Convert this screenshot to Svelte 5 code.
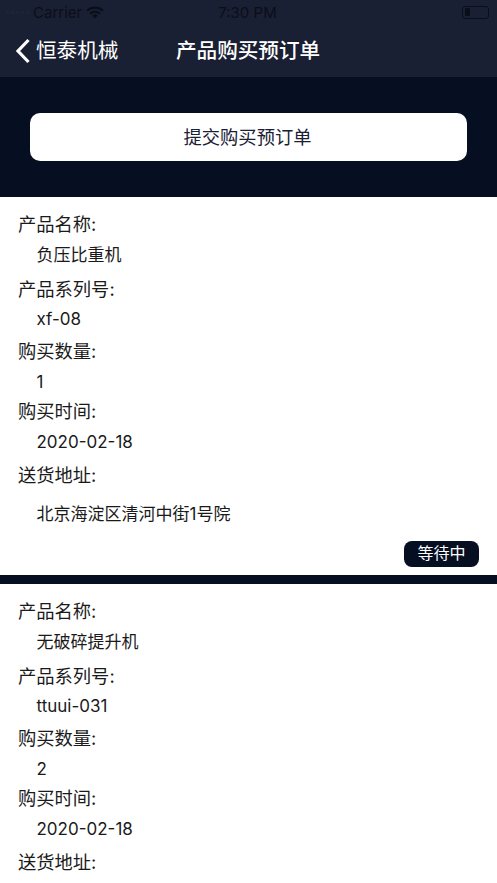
<script>
  const orders = [
    { name: '负压比重机', serial: 'xf-08', qty: '1', date: '2020-02-18', addr: '北京海淀区清河中街1号院', status: '等待中' },
    { name: '无破碎提升机', serial: 'ttuui-031', qty: '2', date: '2020-02-18', addr: '', status: '' }
  ];
</script>

<div class="page">
  <header class="top">
    <div class="status">
      <div class="status-left">
        <span class="dots"><i></i><i></i><i></i><i></i><i></i></span>
        <span class="carrier">Carrier</span>
        <svg class="wifi" width="18" height="13" viewBox="0 0 18 13">
          <path d="M9 12.6 6.3 9.4a4.2 4.2 0 0 1 5.4 0z" fill="#0a0e18"/>
          <path d="M1 4.6a12 12 0 0 1 16 0" fill="none" stroke="#0a0e18" stroke-width="2.2"/>
          <path d="M3.9 7.7a7.7 7.7 0 0 1 10.2 0" fill="none" stroke="#0a0e18" stroke-width="2.2"/>
        </svg>
      </div>
      <span class="time">7:30 PM</span>
      <div class="battery"><span class="level"></span></div>
    </div>
    <nav class="nav">
      <svg class="chev" width="16" height="26" viewBox="0 0 16 26">
        <path d="M13.5 2 3 13l10.5 11" fill="none" stroke="#fff" stroke-width="3.2"/>
      </svg>
      <span class="back">恒泰机械</span>
      <span class="title">产品购买预订单</span>
    </nav>
  </header>

  <section class="hero">
    <button class="submit">提交购买预订单</button>
  </section>

  {#each orders as o}
    <article class="card">
      <div class="label first">产品名称:</div>
      <div class="value">{o.name}</div>
      <div class="label gap5">产品系列号:</div>
      <div class="value tight">{o.serial}</div>
      <div class="label gap3">购买数量:</div>
      <div class="value">{o.qty}</div>
      <div class="label">购买时间:</div>
      <div class="value">{o.date}</div>
      <div class="label gap4">送货地址:</div>
      {#if o.addr}
        <div class="value addr">{o.addr}</div>
      {/if}
      {#if o.status}
        <div class="foot"><span class="badge">{o.status}</span></div>
      {/if}
    </article>
  {/each}
</div>

<style>
  :global(html), :global(body) {
    margin: 0;
    overflow: hidden;
  }
  .page {
    width: 497px;
    height: 883px;
    overflow: hidden;
    background: #060e22;
    font-family: Inter, "Noto Sans CJK SC", sans-serif;
  }
  .top {
    height: 77px;
    background: #1a2033;
    display: flex;
    flex-direction: column;
  }
  .status {
    height: 26px;
    display: grid;
    grid-template-columns: 1fr auto 1fr;
    align-items: center;
    font-size: 15px;
    color: #0a0e18;
    padding: 0 8px 2px 6px;
    box-sizing: border-box;
  }
  .status-left {
    display: flex;
    align-items: center;
    gap: 4px;
  }
  .dots {
    display: flex;
    gap: 2px;
  }
  .dots i {
    width: 3px;
    height: 3px;
    border-radius: 50%;
    background: #20263a;
  }
  .battery {
    justify-self: end;
    width: 22px;
    border: 1px solid #0a0e18;
    border-radius: 3px;
    padding: 1.5px;
    height: 8px;
  }
  .level {
    display: block;
    width: 5px;
    height: 8px;
    background: #0a0e18;
    border-radius: 1px;
  }
  .nav {
    flex: 1;
    display: flex;
    align-items: center;
    color: #fff;
    padding: 0 0 1px 15px;
    font-size: 20.6px;
    line-height: 30px;
  }
  .back {
    margin-left: 5px;
    width: 140px;
    flex: none;
  }
  .title {
    font-weight: 500;
  }
  .hero {
    height: 120px;
    padding: 36px 30px 0;
    box-sizing: border-box;
  }
  .submit {
    display: block;
    width: 100%;
    height: 48px;
    border: 0;
    border-radius: 10px;
    background: #fff;
    color: #1a2033;
    font: inherit;
    font-size: 18.3px;
    padding: 0 2px 2px 0;
  }
  .card {
    background: #fff;
    color: #1a1a1a;
    height: 378px;
    margin-bottom: 9px;
    padding: 13px 18px 0;
    box-sizing: border-box;
    display: flex;
    flex-direction: column;
  }
  .label,
  .value {
    height: 30px;
    white-space: nowrap;
  }
  .label {
    font-size: 18.3px;
    line-height: 28px;
  }
  .value {
    font-size: 17px;
    line-height: 30px;
    padding-left: 18.5px;
  }
  .gap5 { margin-top: 5px; }
  .gap4 { margin-top: 4px; }
  .gap3 { margin-top: 3px; }
  .tight { margin-top: -1px; }
  .addr { margin-top: 8px; }
  .foot {
    display: flex;
    justify-content: flex-end;
    margin-top: 12px;
  }
  .badge {
    width: 75px;
    height: 26px;
    border-radius: 8px;
    background: #060e22;
    color: #fff;
    font-size: 16px;
    line-height: 24px;
    text-align: center;
  }
</style>
